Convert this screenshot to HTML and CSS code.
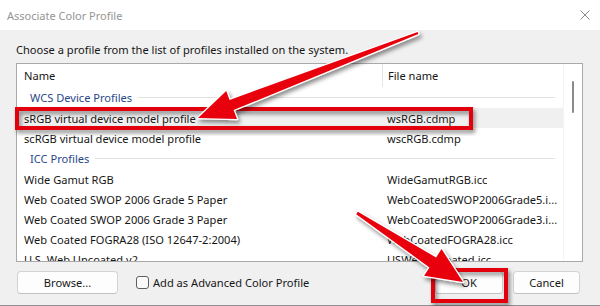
FILE: index.html
```html
<!DOCTYPE html>
<html lang="en">
<head>
  <meta charset="UTF-8" />
  <title>Associate Color Profile</title>
  <link rel="stylesheet" href="styles.css">
</head>
<body>
  <div id="dialog">
    <div class="titlebar">
      <span class="title">Associate Color Profile</span>
      <svg class="close" width="10" height="10" viewBox="0 0 10 10">
        <path d="M0.5 0.5 L9.5 9.5 M9.5 0.5 L0.5 9.5" stroke="#8a8a8a" stroke-width="1" fill="none" />
      </svg>
    </div>

    <div class="content">
      <div class="prompt">Choose a profile from the list of profiles installed on the system.</div>

      <div class="list">
        <div class="table">
          <div class="row header">
            <div class="cell name">Name</div>
            <div class="cell file">File name</div>
          </div>

          <div class="group"><span>WCS Device Profiles</span><i></i></div>
          <div class="row selected">
            <div class="cell name">sRGB virtual device model profile</div>
            <div class="cell file">wsRGB.cdmp</div>
          </div>
          <div class="row">
            <div class="cell name">scRGB virtual device model profile</div>
            <div class="cell file">wscRGB.cdmp</div>
          </div>

          <div class="group"><span>ICC Profiles</span><i></i></div>
          <div class="row">
            <div class="cell name">Wide Gamut RGB</div>
            <div class="cell file">WideGamutRGB.icc</div>
          </div>
          <div class="row">
            <div class="cell name">Web Coated SWOP 2006 Grade 5 Paper</div>
            <div class="cell file">WebCoatedSWOP2006Grade5.i...</div>
          </div>
          <div class="row">
            <div class="cell name">Web Coated SWOP 2006 Grade 3 Paper</div>
            <div class="cell file">WebCoatedSWOP2006Grade3.i...</div>
          </div>
          <div class="row">
            <div class="cell name">Web Coated FOGRA28 (ISO 12647-2:2004)</div>
            <div class="cell file">WebCoatedFOGRA28.icc</div>
          </div>
          <div class="row">
            <div class="cell name">U.S. Web Uncoated v2</div>
            <div class="cell file">USWebUncoated.icc</div>
          </div>
        </div>
        <div class="scroll"><div class="thumb"></div></div>
      </div>

      <div class="actions">
        <button class="btn browse">Browse...</button>
        <label class="check"><span class="box"></span>Add as Advanced Color Profile</label>
        <div class="spacer"></div>
        <button class="btn ok">OK</button>
        <button class="btn cancel">Cancel</button>
      </div>
    </div>

    <!-- annotations drawn over the dialog -->
    <svg class="marks" width="600" height="306" viewBox="0 0 600 306">
      <defs>
        <filter id="shadow" x="-20%" y="-20%" width="140%" height="160%">
          <feDropShadow dx="2" dy="3" stdDeviation="2" flood-color="#000" flood-opacity="0.45" />
        </filter>
      </defs>
      <rect x="17" y="109" width="454" height="19" fill="none" stroke="#e3000f" stroke-width="4" filter="url(#shadow)" />
      <rect x="433" y="270" width="73" height="31" fill="none" stroke="#e3000f" stroke-width="4" filter="url(#shadow)" />
      <polygon class="arrow" filter="url(#shadow)"
        points="198,118 237,119 233.6,110.1 418.4,34.1 417.6,31.9 229.6,99.9 226.2,91" />
      <polygon class="arrow" filter="url(#shadow)"
        points="463,282 424.1,275.8 429.5,267.4 356.2,214.3 357.8,211.7 436.1,257.4 441.5,249" />
    </svg>
  </div>
</body>
</html>
```

FILE: styles.css
```css
html, body {
  margin: 0;
  padding: 0;
  width: 600px;
  height: 306px;
  overflow: hidden;
  font-family: "Noto Sans", "Open Sans", sans-serif;
  font-size: 11.1px;
  color: #161616;
  background: #f0f0f0;
}

#dialog {
  position: relative;
  width: 600px;
  height: 306px;
  box-sizing: border-box;
  border-bottom: 1px solid #8f8f8f;
  display: flex;
  flex-direction: column;
}

.titlebar {
  height: 30px;
  flex: none;
  background: #fff;
  display: flex;
  align-items: center;
  justify-content: space-between;
  padding: 0 10px 0 7px;
}

.title {
  color: #959595;
  font-size: 11px;
}

.content {
  flex: 1;
  background: #f0f0f0;
  padding: 12px 17px 0 16px;
}

.prompt {
  height: 16px;
  line-height: 16px;
  margin-bottom: 5px;
}

.list {
  height: 197px;
  border: 1px solid #a9a9a9;
  background: #fff;
  display: flex;
  overflow: hidden;
}

.table {
  width: 546px;
  flex: none;
}

.row {
  display: flex;
  height: 20px;
  align-items: center;
  white-space: nowrap;
}

.row.header {
  height: 23px;
}

.row.selected {
  background: #f0f0f0;
}

.cell.name {
  width: 358px;
  padding-left: 7px;
  flex: none;
}

.cell.file {
  padding-left: 5px;
  overflow: hidden;
}

.header .cell {
  height: 23px;
  line-height: 23px;
}

.header .cell.name {
  border-right: 1px solid #e5e5e5;
}

.group {
  display: flex;
  align-items: center;
  height: 21px;
  padding: 0 8px 0 13px;
  color: #2a4887;
}

.group i {
  flex: 1;
  height: 1px;
  margin-left: 6px;
  background: #e2e2e2;
}

.table > .group:last-of-type {
  height: 22px;
}

.scroll {
  flex: 1;
  border-left: 1px solid #f4f4f4;
}

.thumb {
  width: 2px;
  height: 32px;
  margin: 17px 0 0 8px;
  background: #8a8a8a;
  border-radius: 1px;
}

.actions {
  display: flex;
  align-items: center;
  margin-top: 9px;
  padding-right: 3px;
}

.btn {
  font-family: inherit;
  font-size: 11.1px;
  color: #161616;
  height: 23px;
  background: #fdfdfd;
  border: 1px solid #d3d3d3;
  border-bottom-color: #c2c2c2;
  border-radius: 4px;
  padding: 0;
}

.browse {
  width: 101px;
  margin-left: 1px;
}

.check {
  display: flex;
  align-items: center;
  margin-left: 18px;
}

.check .box {
  width: 11px;
  height: 11px;
  border: 1px solid #5f5f5f;
  border-radius: 3px;
  background: #fafafa;
  margin-right: 4px;
}

.spacer {
  flex: 1;
}

.ok {
  width: 68px;
}

.cancel {
  width: 67px;
  margin-left: 10px;
}

.marks {
  position: absolute;
  top: 0;
  left: 0;
  pointer-events: none;
}

.arrow {
  fill: #e8000c;
  stroke: #fff;
  stroke-width: 2.5;
  stroke-linejoin: round;
  paint-order: stroke fill;
}
```
